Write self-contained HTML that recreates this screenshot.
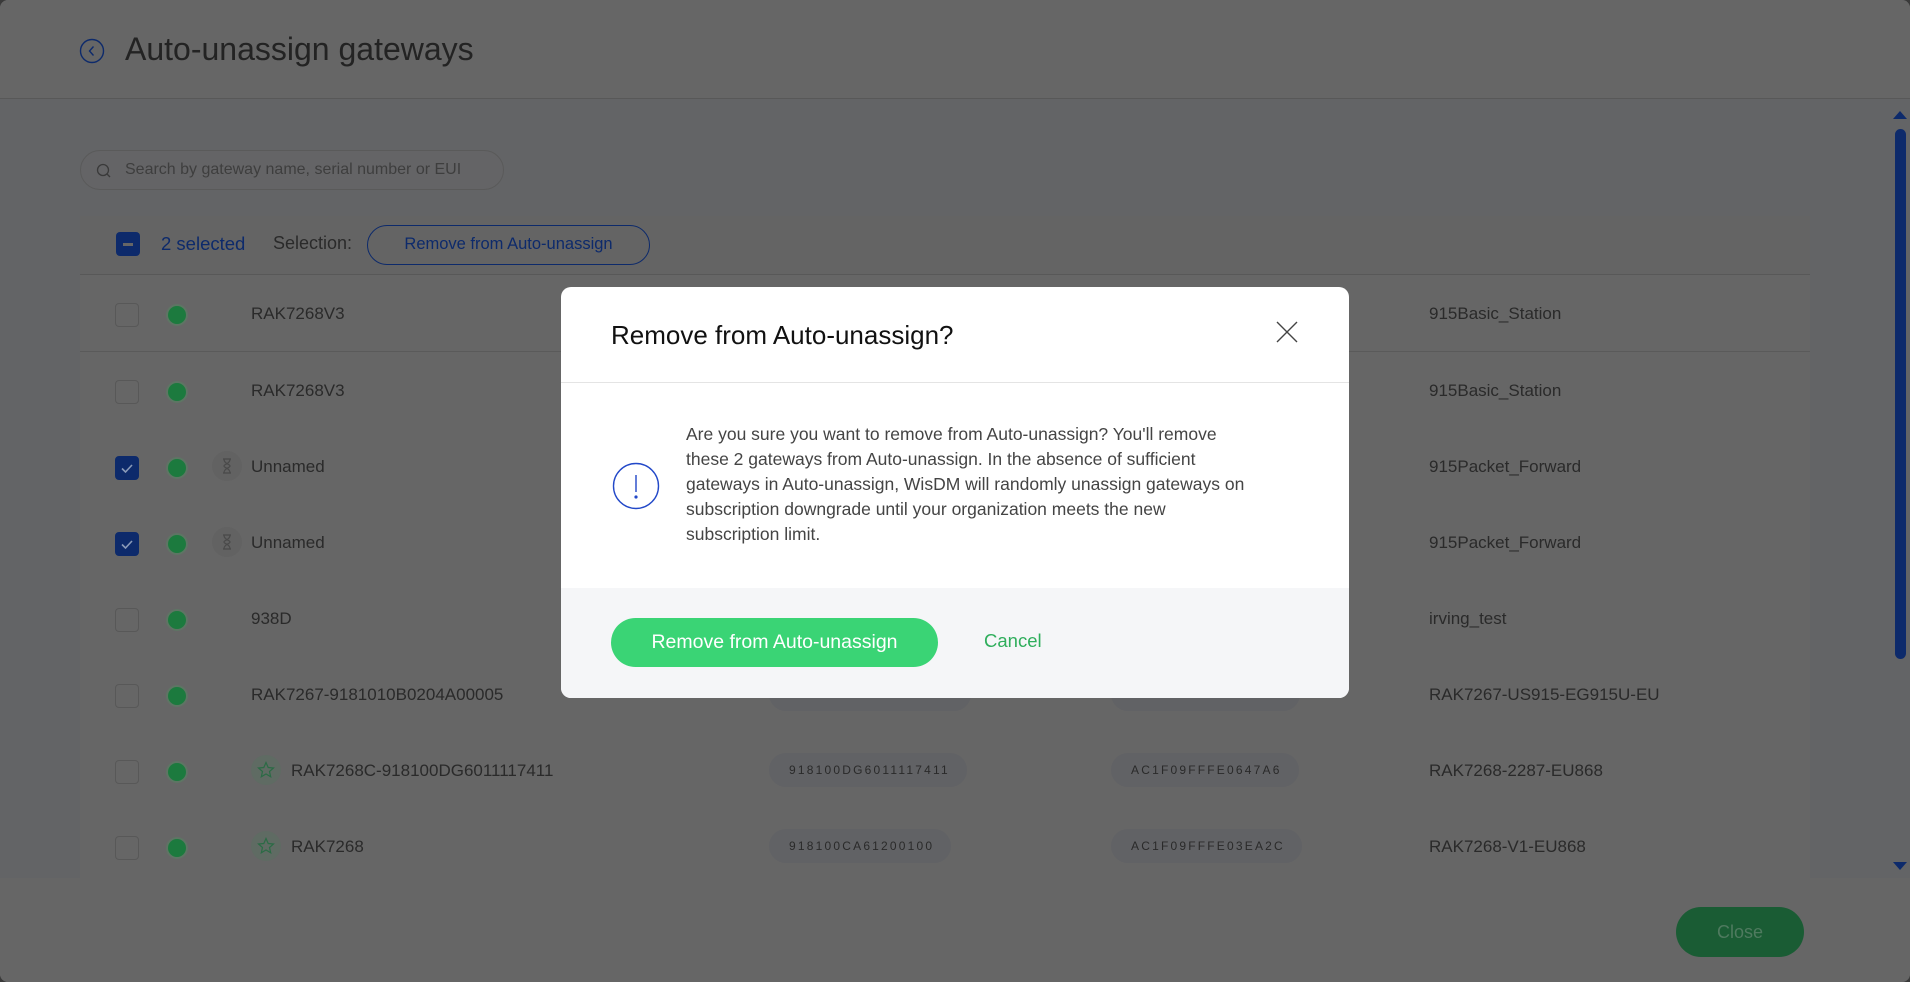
<!DOCTYPE html>
<html><head><meta charset="utf-8"><style>
*{box-sizing:border-box;margin:0;padding:0}
body{width:1910px;height:982px;overflow:hidden;background:#3a3a3a;font-family:"Liberation Sans",sans-serif;position:relative}
.page{position:absolute;left:0;top:0;width:1910px;height:982px;background:#636466;border-radius:8px;overflow:hidden}
.hdr{position:absolute;left:0;top:0;width:1910px;height:99px;background:#666;border-bottom:1px solid #585858}
.abs{position:absolute}
.row{position:absolute;left:80px;width:1730px;height:77px;background:#666;border-bottom:1px solid #5a5a5a}
.cb{position:absolute;left:35px;top:28px;width:24px;height:24px;border:1px solid #585858;border-radius:4px}
.cb.on{background:#0d2a6b;border-color:#0d2a6b}
.dot{position:absolute;left:88px;top:31px;width:18px;height:18px;border-radius:50%;background:#1c7a3e;box-shadow:0 0 0 2px #5e7564}
.nm{position:absolute;top:29px;font-size:17px;color:#2a2a2a}
.pill{position:absolute;top:21px;height:34px;border-radius:17px;background:#616265;font-size:12px;letter-spacing:2.2px;color:#2a2a2a;line-height:34px;padding:0 17px 0 20px}
.ic{position:absolute;left:132px;top:23px;width:30px;height:30px;border-radius:50%;background:#626262}
.st{position:absolute;left:171px;top:23px;width:30px;height:30px;border-radius:50%;background:#5f6b63}
</style></head><body>
<div class="page">
<div class="hdr">
<svg class="abs" style="left:79px;top:38px" width="26" height="26" viewBox="0 0 26 26"><circle cx="13" cy="13" r="11.5" fill="none" stroke="#0d2a6b" stroke-width="1.4"/><path d="M14.5 8.5 L10.5 13 L14.5 17.5" fill="none" stroke="#0d2a6b" stroke-width="1.4"/></svg>
<div class="abs" style="left:125px;top:31px;font-size:32px;color:#232323">Auto-unassign gateways</div>
</div>
<div class="abs" style="left:80px;top:150px;width:424px;height:40px;border:1px solid #5a5a5a;border-radius:20px;background:#646466">
<svg class="abs" style="left:15px;top:12px" width="16" height="16" viewBox="0 0 16 16"><circle cx="7" cy="7" r="5.5" fill="none" stroke="#3a3a3a" stroke-width="1.3"/><path d="M11 11 L14 14" stroke="#3a3a3a" stroke-width="1.3"/></svg>
<div class="abs" style="left:44px;top:10px;font-size:16px;color:#3e3e3e">Search by gateway name, serial number or EUI</div>
</div>
<div class="abs" style="left:80px;top:216px;width:1730px;height:59px;background:#646464;border-bottom:1px solid #585858">
<div class="abs" style="left:36px;top:16px;width:24px;height:24px;border-radius:4px;background:#0d2a6b"><div class="abs" style="left:7px;top:11px;width:10px;height:2.5px;background:#666"></div></div>
<div class="abs" style="left:81px;top:17px;font-size:18.5px;color:#0d2a6b">2 selected</div>
<div class="abs" style="left:193px;top:17px;font-size:18px;color:#2a2a2a">Selection:</div>
<div class="abs" style="left:287px;top:9px;width:283px;height:40px;border:1.5px solid #0d2a6b;border-radius:20px;text-align:center;line-height:37px;font-size:16.5px;color:#0d2a6b">Remove from Auto-unassign</div>
</div>

<div class="row" style="top:275px"><div class="cb"></div><div class="dot"></div><div class="nm" style="left:171px">RAK7268V3</div><div class="nm" style="left:1349px">915Basic_Station</div></div>
<div class="row" style="top:352px"><div class="cb"></div><div class="dot"></div><div class="nm" style="left:171px">RAK7268V3</div><div class="nm" style="left:1349px">915Basic_Station</div></div>
<div class="row" style="top:428px"><div class="cb on"><svg width="22" height="22" viewBox="0 0 22 22"><path d="M6 11.5 L9.5 15 L16 8" fill="none" stroke="#8a9ab8" stroke-width="1.6"/></svg></div><div class="dot"></div><div class="ic"><svg width="30" height="30" viewBox="0 0 30 30"><path d="M11 8 H19 M11 22 H19 M12 8 C12 13 18 13 18 15 C18 17 12 17 12 22 M18 8 C18 13 12 13 12 15 M18 22 C18 17 12 17 12 15" fill="none" stroke="#4a4a4a" stroke-width="1.2"/></svg></div><div class="nm" style="left:171px">Unnamed</div><div class="nm" style="left:1349px">915Packet_Forward</div></div>
<div class="row" style="top:504px"><div class="cb on"><svg width="22" height="22" viewBox="0 0 22 22"><path d="M6 11.5 L9.5 15 L16 8" fill="none" stroke="#8a9ab8" stroke-width="1.6"/></svg></div><div class="dot"></div><div class="ic"><svg width="30" height="30" viewBox="0 0 30 30"><path d="M11 8 H19 M11 22 H19 M12 8 C12 13 18 13 18 15 C18 17 12 17 12 22 M18 8 C18 13 12 13 12 15 M18 22 C18 17 12 17 12 15" fill="none" stroke="#4a4a4a" stroke-width="1.2"/></svg></div><div class="nm" style="left:171px">Unnamed</div><div class="nm" style="left:1349px">915Packet_Forward</div></div>
<div class="row" style="top:580px"><div class="cb"></div><div class="dot"></div><div class="nm" style="left:171px">938D</div><div class="nm" style="left:1349px">irving_test</div></div>
<div class="row" style="top:656px"><div class="cb"></div><div class="dot"></div><div class="nm" style="left:171px">RAK7267-9181010B0204A00005</div><div class="pill" style="left:689px">918101OB0204A00005</div><div class="pill" style="left:1031px">AC1F09FFFE0000AA</div><div class="nm" style="left:1349px">RAK7267-US915-EG915U-EU</div></div>
<div class="row" style="top:732px"><div class="cb"></div><div class="dot"></div><div class="st"><svg width="30" height="30" viewBox="0 0 30 30"><path d="M15 7.5 L17.2 12.5 L22.5 13 L18.5 16.5 L19.7 21.8 L15 19 L10.3 21.8 L11.5 16.5 L7.5 13 L12.8 12.5 Z" fill="none" stroke="#2b6b45" stroke-width="1.2"/></svg></div><div class="nm" style="left:211px">RAK7268C-918100DG6011117411</div><div class="pill" style="left:689px">918100DG6011117411</div><div class="pill" style="left:1031px">AC1F09FFFE0647A6</div><div class="nm" style="left:1349px">RAK7268-2287-EU868</div></div>
<div class="row" style="top:808px;border-bottom:none"><div class="cb"></div><div class="dot"></div><div class="st"><svg width="30" height="30" viewBox="0 0 30 30"><path d="M15 7.5 L17.2 12.5 L22.5 13 L18.5 16.5 L19.7 21.8 L15 19 L10.3 21.8 L11.5 16.5 L7.5 13 L12.8 12.5 Z" fill="none" stroke="#2b6b45" stroke-width="1.2"/></svg></div><div class="nm" style="left:211px">RAK7268</div><div class="pill" style="left:689px">918100CA61200100</div><div class="pill" style="left:1031px">AC1F09FFFE03EA2C</div><div class="nm" style="left:1349px">RAK7268-V1-EU868</div></div>

<div class="abs" style="left:0;top:878px;width:1910px;height:104px;background:#666"></div>
<div class="abs" style="left:1676px;top:907px;width:128px;height:50px;border-radius:25px;background:#1a5c34;color:#4f7a5f;font-size:18px;text-align:center;line-height:50px">Close</div>

<svg class="abs" style="left:1893px;top:110px" width="14" height="10"><path d="M0 9 L7 1 L14 9 Z" fill="#0d2a6b"/></svg>
<div class="abs" style="left:1895px;top:129px;width:11px;height:530px;border-radius:6px;background:#0d2a6b"></div>
<svg class="abs" style="left:1893px;top:861px" width="14" height="10"><path d="M0 1 L7 9 L14 1 Z" fill="#0d2a6b"/></svg>
</div>

<div class="abs" style="left:561px;top:287px;width:788px;height:411px;background:#fff;border-radius:10px;overflow:hidden">
<div class="abs" style="left:50px;top:33px;font-size:26px;color:#111">Remove from Auto-unassign?</div>
<svg class="abs" style="left:714px;top:33px" width="24" height="24" viewBox="0 0 24 24"><path d="M2 2 L22 22 M22 2 L2 22" stroke="#444" stroke-width="1.4"/></svg>
<div class="abs" style="left:0;top:95px;width:788px;height:1px;background:#e4e4e4"></div>
<svg class="abs" style="left:51px;top:175px" width="48" height="48" viewBox="0 0 48 48"><circle cx="24" cy="24" r="22.5" fill="none" stroke="#2248c8" stroke-width="1.4"/><path d="M24 13 V30" stroke="#2248c8" stroke-width="1.4"/><circle cx="24" cy="35" r="1.6" fill="#2248c8"/></svg>
<div class="abs" style="left:125px;top:135px;white-space:nowrap;font-size:17.5px;line-height:25px;color:#444">Are you sure you want to remove from Auto-unassign? You'll remove<br>these 2 gateways from Auto-unassign. In the absence of sufficient<br>gateways in Auto-unassign, WisDM will randomly unassign gateways on<br>subscription downgrade until your organization meets the new<br>subscription limit.</div>
<div class="abs" style="left:0;top:301px;width:788px;height:110px;background:#f5f6f8">
<div class="abs" style="left:50px;top:30px;width:327px;height:49px;border-radius:25px;background:#3ad475;color:#fff;font-size:19.5px;text-align:center;line-height:49px">Remove from Auto-unassign</div>
<div class="abs" style="left:423px;top:42px;font-size:18.5px;color:#2fae5c">Cancel</div>
</div>
</div>
</body></html>
